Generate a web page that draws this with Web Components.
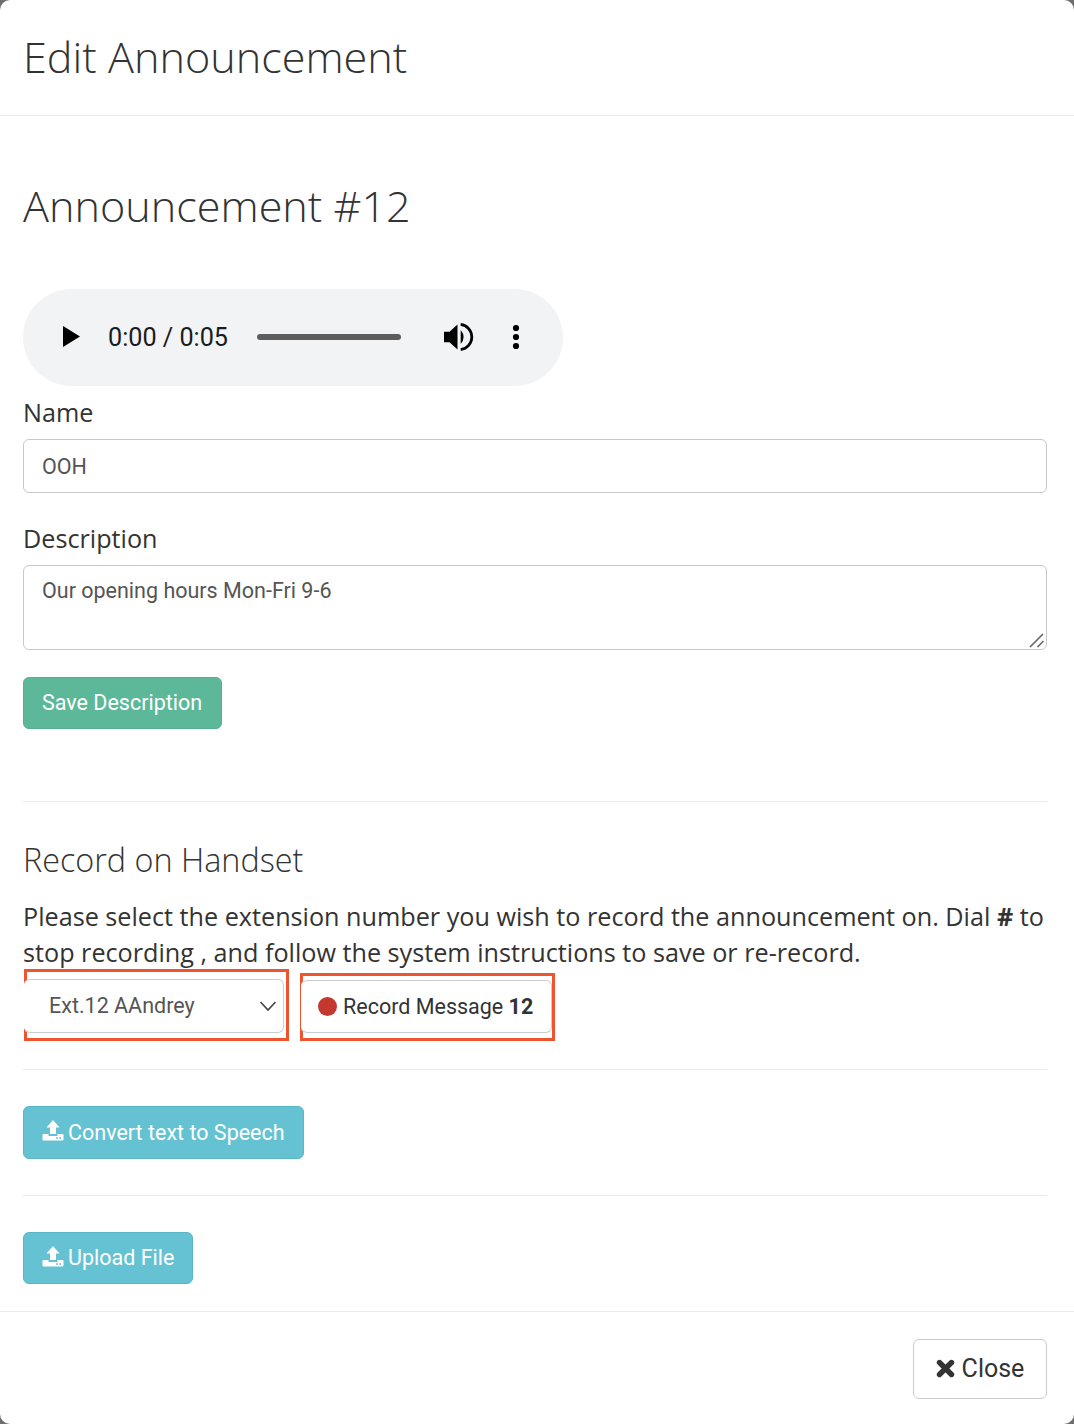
<!DOCTYPE html>
<html>
<head>
<meta charset="utf-8">
<title>Edit Announcement</title>
<style>
  html, body { margin: 0; padding: 0; background: #6e6e6e; }
  body { font-family: "Open Sans", "Noto Sans", sans-serif; color: #333; }
</style>
</head>
<body>
<edit-modal heading="Edit Announcement">
  <page-title>Announcement #12</page-title>
  <audio-bar current="0:00" total="0:05"></audio-bar>
  <text-field label="Name" value="OOH"></text-field>
  <text-field label="Description" value="Our opening hours Mon-Fri 9-6" multiline></text-field>
  <action-button kind="green">Save Description</action-button>
  <section-rule style="margin-top:72px"></section-rule>
  <record-panel extension="Ext.12 AAndrey" number="12"></record-panel>
  <section-rule style="margin-top:27px"></section-rule>
  <action-button kind="teal" icon="upload" style="margin-top:36px">Convert text to Speech</action-button>
  <section-rule style="margin-top:36px"></section-rule>
  <action-button kind="teal" icon="upload" style="margin-top:36px;--btn-height:52px">Upload File</action-button>
</edit-modal>

<script>
const UPLOAD_ICON = `<svg width="22" height="21" viewBox="0 0 22 21" fill="#fff" aria-hidden="true">
  <path d="M11 0 L17.5 7.5 H14 V14 H8 V7.5 H4.5 Z"/>
  <path d="M0.5 15 a1 1 0 0 1 1-1 H6.5 V16 H15.5 V14 H20.5 a1 1 0 0 1 1 1 V19.5 a1 1 0 0 1-1 1 H1.5 a1 1 0 0 1-1-1 Z"/>
  <circle cx="15" cy="18" r=".9" fill="#65c2d2"/><circle cx="18.2" cy="18" r=".9" fill="#65c2d2"/>
</svg>`;

class EditModal extends HTMLElement {
  connectedCallback() {
    this.attachShadow({ mode: 'open' });
    this.shadowRoot.innerHTML = `
      <style>
        :host { display: flex; flex-direction: column; width: 1074px; height: 1424px; box-sizing: border-box; background: #fff; border-radius: 10px; }
        header { height: 115px; box-sizing: content-box; border-bottom: 1px solid #e9ecef; padding: 0 23px 0 23px; display: flex; align-items: center; flex: none; }
        h1 { margin: 0 0 2px; font: 300 43.2px/1 "Open Sans", sans-serif; color: #333; }
        main { flex: none; height: 1196px; box-sizing: border-box; padding: 0 27px 0 23px; display: flow-root; border-bottom: 1px solid #e9ecef; }
        footer { flex: 1; display: flex; justify-content: flex-end; align-items: flex-start; padding: 27px 27px 0 0; }
        .close { width: 134px; height: 60px; box-sizing: border-box; border: 1px solid #ccc; border-radius: 6px; background: #fff; padding-bottom: 2px;
          display: flex; align-items: center; justify-content: center; gap: 7px; font: 400 25px/1 Roboto, sans-serif; color: #333; }
      </style>
      <header><h1>${this.getAttribute('heading')}</h1></header>
      <main><slot></slot></main>
      <footer>
        <div class="close">
          <svg width="19" height="19" viewBox="0 0 19 19" aria-hidden="true"><path d="M3.5 3.5 L15.5 15.5 M15.5 3.5 L3.5 15.5" stroke="#333" stroke-width="5.4" stroke-linecap="round"/></svg>
          Close
        </div>
      </footer>`;
  }
}

class PageTitle extends HTMLElement {
  connectedCallback() {
    this.attachShadow({ mode: 'open' });
    this.shadowRoot.innerHTML = `
      <style>
        :host { display: block; margin: 58px 0 51px; font: 300 43.2px/64px "Open Sans", sans-serif; color: #333; }
      </style>
      <slot></slot>`;
  }
}

class AudioBar extends HTMLElement {
  connectedCallback() {
    this.attachShadow({ mode: 'open' });
    this.shadowRoot.innerHTML = `
      <style>
        :host { display: flex; align-items: center; width: 540px; height: 97px; box-sizing: border-box; background: #f1f3f4; border-radius: 48.5px; padding: 0 0 2px 40px; }
        .time { margin: 2px 0 0 28px; width: 149px; font: 400 25.2px/1 Roboto, sans-serif; color: #1b1b1b; }
        .track { width: 144px; height: 6px; border-radius: 3px; background: #5d5d5d; }
        .vol { margin-left: 43px; }
        .more { margin-left: 38px; }
        svg { display: block; flex: none; }
      </style>
      <svg width="17" height="21" viewBox="0 0 17 21"><path d="M0 0 L17 10.5 L0 21 Z" fill="#000"/></svg>
      <div class="time">${this.getAttribute('current')} / ${this.getAttribute('total')}</div>
      <div class="track"></div>
      <svg class="vol" width="30" height="28" viewBox="0 0 30 28">
        <path d="M0 8.7 H5.5 L13.5 1.6 V26.4 L5.5 19.3 H0 Z" fill="#000"/>
        <path d="M16.7 7 Q22.5 14 16.7 21 Z" fill="#000"/>
        <path d="M16.7 1.4 A12.7 12.7 0 0 1 16.7 26.6" fill="none" stroke="#000" stroke-width="2.7"/>
      </svg>
      <svg class="more" width="8" height="26" viewBox="0 0 8 26"><circle cx="4" cy="4" r="3.1"/><circle cx="4" cy="13" r="3.1"/><circle cx="4" cy="22" r="3.1"/></svg>`;
  }
}

class TextField extends HTMLElement {
  connectedCallback() {
    const multi = this.hasAttribute('multiline');
    const value = this.getAttribute('value');
    this.attachShadow({ mode: 'open' });
    this.shadowRoot.innerHTML = `
      <style>
        :host { display: block; margin-bottom: ${multi ? 27 : 30}px; }
        label { display: block; font: 400 25.2px/30px "Open Sans", sans-serif; color: #333; margin: 11px 0 12px; }
        .wrap { position: relative; }
        .box { display: block; width: 100%; box-sizing: border-box; border: 1px solid #c8c8c8; border-radius: 6px; background: #fff;
          font: 400 21.5px/28px Roboto, sans-serif; color: #555; padding: 11px 18px; margin: 0; outline: none; resize: none; }
        input.box { height: 54px; }
        textarea.box { height: 85px; }
        .grip { position: absolute; right: 1px; bottom: 1px; }
      </style>
      <label>${this.getAttribute('label')}</label>
      <div class="wrap">
        ${multi ? `<textarea class="box">${value}</textarea>
        <svg class="grip" width="18" height="18" viewBox="0 0 18 18"><path d="M2 16 L15 3 M9.5 16 L15.5 10" stroke="#666" stroke-width="1.6" fill="none"/></svg>` : `<input class="box" value="${value}">`}
      </div>`;
  }
}

class ActionButton extends HTMLElement {
  connectedCallback() {
    const kind = this.getAttribute('kind');
    const hasIcon = this.getAttribute('icon') === 'upload';
    this.attachShadow({ mode: 'open' });
    this.shadowRoot.innerHTML = `
      <style>
        :host { display: block; }
        button { display: flex; align-items: center; gap: 4px; height: var(--btn-height, 53px); box-sizing: border-box; padding: 0 18px; border-radius: 6px; border: 1px solid;
          font: 400 21.5px/1 Roboto, sans-serif; color: #fff; cursor: pointer; }
        .green { background: #5cb899; border-color: #53b091; height: 52px; padding-right: 19px; }
        .teal { background: #65c2d2; border-color: #58b6c6; }
        svg { display: block; margin-top: -4px; }
      </style>
      <button class="${kind}">${hasIcon ? UPLOAD_ICON : ''}<slot></slot></button>`;
  }
}

class SectionRule extends HTMLElement {
  connectedCallback() {
    this.attachShadow({ mode: 'open' });
    this.shadowRoot.innerHTML = `<style>:host { display: block; height: 1px; background: #e9ecef; }</style>`;
  }
}

class RecordPanel extends HTMLElement {
  connectedCallback() {
    this.attachShadow({ mode: 'open' });
    this.shadowRoot.innerHTML = `
      <style>
        :host { display: block; }
        h3 { margin: 34px 0 16px; font: 300 32.35px/46px "Open Sans", sans-serif; color: #333; }
        p { margin: 0; font: 400 25.2px/36px "Open Sans", sans-serif; color: #333; }
        .controls { display: flex; align-items: flex-start; margin-top: -1px; height: 73px; }
        .mark { box-sizing: border-box; border: 3px solid #ee5430; flex: none; position: relative; }
        .pick { margin: 0 0 0 1px; width: 265px; height: 72px; }
        .rec { margin: 4px 0 0 11px; width: 255px; height: 68px; }
        .inner { position: absolute; box-sizing: border-box; background: #fff; border: 1px solid #ccc; border-radius: 6px; display: flex; align-items: center; color: #555; }
        .pick .inner { left: -3px; top: 7px; width: 260px; height: 54px; padding-left: 24px; font: 400 21.5px/1 Roboto, sans-serif; border-left-color: #fff; }
        .pick svg { position: absolute; right: 6px; top: 20px; }
        .rec .inner { left: -2px; top: 4px; width: 251px; height: 53px; padding-left: 16px; gap: 6px; font: 400 21.5px/1 Roboto, sans-serif; color: #333; border-left-color: #fff; }
        .dot { width: 19px; height: 19px; border-radius: 50%; background: #c4382e; flex: none; }
        b { font-weight: 700; }
      </style>
      <h3>Record on Handset</h3>
      <p>Please select the extension number you wish to record the announcement on. Dial <b>#</b> to<br>stop recording , and follow the system instructions to save or re-record.</p>
      <div class="controls">
        <div class="mark pick">
          <div class="inner">${this.getAttribute('extension')}
            <svg width="18" height="12" viewBox="0 0 18 12"><path d="M1.5 2 L9 10 L16.5 2" fill="none" stroke="#444" stroke-width="1.6"/></svg>
          </div>
        </div>
        <div class="mark rec">
          <div class="inner"><span class="dot"></span><span>Record Message <b>${this.getAttribute('number')}</b></span></div>
        </div>
      </div>`;
  }
}

customElements.define('edit-modal', EditModal);
customElements.define('page-title', PageTitle);
customElements.define('audio-bar', AudioBar);
customElements.define('text-field', TextField);
customElements.define('action-button', ActionButton);
customElements.define('section-rule', SectionRule);
customElements.define('record-panel', RecordPanel);
</script>
</body>
</html>
